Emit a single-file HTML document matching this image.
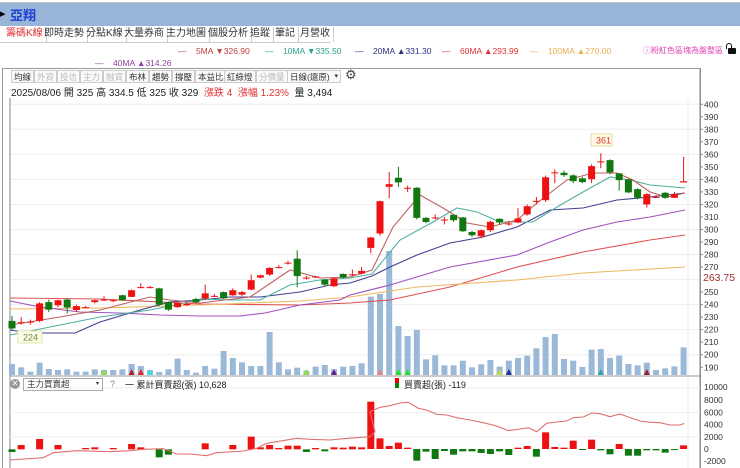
<!DOCTYPE html>
<html><head><meta charset="utf-8">
<style>
*{margin:0;padding:0;box-sizing:border-box}
body{width:740px;height:468px;overflow:hidden;background:#fff;font-family:"Liberation Sans","Noto Sans CJK TC",sans-serif;position:relative}
.abs{position:absolute;white-space:nowrap}
#title{left:0;top:2px;width:740px;height:24px;background:#98b5d9;border-top:1px solid #c8c8c8}
.tab{position:absolute;top:27px;height:15px;font-size:10px;line-height:14px;color:#333;border-right:1px solid #ccc;padding:0 3px}
.tb{position:absolute;top:70px;height:13px;font-size:8.5px;line-height:12px;border:1px solid #ccc;padding:0 2px;color:#333;background:#fafafa}
.tb.d{color:#bbb}
.lg{font-size:8.5px;position:absolute}
</style></head><body>
<div id="title" class="abs"></div>
<div class="abs" style="left:0;top:7px;font-size:11px;color:#000">▸</div>
<div class="abs" style="left:10px;top:5px;font-size:13px;font-weight:bold;color:#1a3fd0">亞翔</div>
<div class="abs" style="left:0;top:26px;width:330px;height:17px;border-bottom:1px solid #ccc"></div>
<div class="tab" style="left:3px;color:#e03030">籌碼K線</div>
<div class="tab" style="left:41px">即時走勢</div>
<div class="tab" style="left:83px">分點K線</div>
<div class="tab" style="left:121px">大量券商</div>
<div class="tab" style="left:163px">主力地圖</div>
<div class="tab" style="left:205px">個股分析</div>
<div class="tab" style="left:247px">追蹤</div>
<div class="tab" style="left:272px">筆記</div>
<div class="tab" style="left:297px">月營收</div>

<div class="lg" style="left:178px;top:46px;color:#c04040">—&nbsp;&nbsp;&nbsp;&nbsp;5MA <span>▼</span>326.90</div>
<div class="lg" style="left:265px;top:46px;color:#30a090">—&nbsp;&nbsp;&nbsp;&nbsp;10MA ▼335.50</div>
<div class="lg" style="left:355px;top:46px;color:#303080">—&nbsp;&nbsp;&nbsp;&nbsp;20MA ▲331.30</div>
<div class="lg" style="left:442px;top:46px;color:#e03030">—&nbsp;&nbsp;&nbsp;&nbsp;60MA ▲293.99</div>
<div class="lg" style="left:530px;top:46px;color:#e8b050">—&nbsp;&nbsp;&nbsp;&nbsp;100MA ▲270.00</div>
<div class="lg" style="left:643px;top:45px;color:#e040b0;font-size:8px">ⓘ粉紅色區塊為盤整區</div>
<div class="abs" style="left:728px;top:48px;width:8px;height:6px;background:#111;border-radius:1px"></div>
<div class="abs" style="left:726px;top:43px;width:6px;height:6px;border:1.5px solid #111;border-bottom:none;border-radius:3px 3px 0 0"></div>
<div class="lg" style="left:95px;top:58px;color:#9040a0">—&nbsp;&nbsp;&nbsp;&nbsp;40MA ▲314.26</div>

<div class="abs" style="left:2px;top:68px;width:699px;height:400px;border-left:1px solid #999;border-top:1px solid #999;border-right:1px solid #999"></div>
<div class="tb" style="left:11px">均線</div>
<div class="tb d" style="left:34px">外資</div>
<div class="tb d" style="left:57px">投信</div>
<div class="tb d" style="left:80px">主力</div>
<div class="tb d" style="left:103px">融資</div>
<div class="tb" style="left:126px">布林</div>
<div class="tb" style="left:149px">趨勢</div>
<div class="tb" style="left:172px">撐壓</div>
<div class="tb" style="left:195px">本益比</div>
<div class="tb" style="left:224px">紅綠燈</div>
<div class="tb d" style="left:256px">分價量</div>
<div class="tb" style="left:287px;width:54px">日線(還原) <span style="float:right;font-size:7px">▾</span></div>
<div class="abs" style="left:345px;top:67px;font-size:13px;color:#444">⚙</div>
<div class="abs" style="left:11px;top:84px;font-size:10px;color:#222">2025/08/06 開 325 高 334.5 低 325 收 329 &nbsp;<span style="color:#e03030">漲跌 4 &nbsp;漲幅 1.23%</span> &nbsp;量 3,494</div>

<svg class="abs" style="left:0;top:0" width="740" height="468" id="sv"></svg>

<div class="abs" style="left:10px;top:379px;width:10px;height:10px;border-radius:50%;background:#999;color:#fff;font-size:8px;line-height:10px;text-align:center">✕</div>
<div class="abs" style="left:23px;top:378px;width:80px;height:13px;border:1px solid #aaa;font-size:8.5px;line-height:11px;padding-left:3px;color:#333">主力買賣超<span style="position:absolute;right:3px;font-size:6px">▾</span></div>
<div class="abs" style="left:110px;top:379px;font-size:9px;color:#888">?</div>
<div class="abs" style="left:125px;top:378px;font-size:9px;color:#222">一 累計買賣超(張) 10,628</div>
<div class="abs" style="left:395px;top:378px;width:4px;height:5px;background:#e00"></div>
<div class="abs" style="left:395px;top:383px;width:4px;height:5px;background:#080"></div>
<div class="abs" style="left:404px;top:378px;font-size:9px;color:#222">買賣超(張) -119</div>

<script>
var C=[[227,221,231,220],[226,226,230,224],[226,226.5,228,224],[227,241,242,226],[242,236,244,234],[239.5,243.5,244,238],[244,237.7,245,233],[235.7,238.8,240,234],[238,238,239,237],[242,243.5,244,241],[244,244,246.8,243],[243.5,243.5,244.5,242],[247.5,243.5,248,243],[246.2,251.5,252,246],[254,254,257,253],[254,254,255,253],[253,240,253.5,239],[242,236,242.5,235],[238,241.6,242,237.5],[240.5,240.5,241.5,239],[244.5,242,245.5,241],[244.8,249,256,244],[247,247,248.5,246],[250,245,250.5,244.5],[247.5,251.5,253,247],[248,250,251,247],[252,259.5,264,251.5],[261.6,263.4,264,261],[264,269.3,270,263],[270,270,271.5,269],[273.5,273.5,275,272],[276.7,262.8,283.4,254],[261.6,261.6,263,260],[262,262.5,263,261],[260,256,260.5,255],[254.7,261,262,254],[264.5,261.6,265,261],[264.2,264.2,268,263],[264.8,266.9,270,264],[285.3,293.6,294,281],[296.8,322.6,323,295],[334.1,336.2,346,324.8],[341.3,337.6,350,334],[333.3,333.3,335,330],[333.3,309.3,334,308],[309.3,306,310,305],[309.6,309.6,312,308],[308,308,310,304],[311.7,307.4,312,306],[309.6,298.6,310,298],[298,295.4,299,294],[294.6,299.4,300,293],[299.4,306.1,307,298],[308.5,305.6,309,304],[304.8,304.8,307,303],[305.6,308.8,317,305],[312,318.6,320,311],[322.9,322.9,326,320],[323.4,341.6,343,322],[345.6,345.6,348,337],[345.3,343.4,347,342],[343.2,338.6,344,337],[340.8,337.8,342,337],[340.2,350.6,352,337],[354.4,354.4,360.8,349],[355.4,345.6,356,344],[344.8,339.4,345,331],[340,329.6,340.5,329],[332.2,325.3,333,324],[320,328.2,329,317.5],[326,326,327.5,325],[329.3,325.3,330,324.5],[325.3,328.2,330,325],[337.5,338.5,358,337.5]];
var V1=[642,652,665,638,657,660,658,665,665,658,660,660,658,642,648,660,666,658,626,660,668,648,656,603,624,637,648,648,546,637,658,653,662,650,645,658,650];
var V2=[738,730,530,522,393,618,648,630,718,706,736,736,722,742,733,720,740,722,714,707,685,651,642,717,722,741,689,687,714,707,732,736,728,750,745,739,682];
var s='';
function py(p){return 129.3+(380-p)*1.2524}
function X(i){return 12+i*9.2}
for(var p=200;p<=400;p+=20){var y=py(p);s+='<line x1="10" x2="700" y1="'+y+'" y2="'+y+'" stroke="#eee" stroke-width="1"/>';}
s+='<line x1="10" y1="98" x2="10" y2="468" stroke="#888"/>';
s+='<line x1="700" y1="68" x2="700" y2="468" stroke="#888"/>';
s+='<line x1="688" y1="98" x2="688" y2="468" stroke="#eee"/>';
s+='<line x1="10" y1="376" x2="700" y2="376" stroke="#999"/>';
for(var p=190;p<=400;p+=10){if(p==260)continue;s+='<text x="704" y="'+(py(p)+3)+'" font-size="8.5" fill="#333">'+p+'</text><line x1="700" x2="703" y1="'+py(p)+'" y2="'+py(p)+'" stroke="#888"/>';}
s+='<text x="703" y="281" font-size="10.5" fill="#a03030">263.75</text>';
for(var i=0;i<74;i++){var t=i<37?150+V1[i]/3:120+V2[i-37]/3;s+='<rect x="'+(X(i)-3)+'" y="'+t+'" width="6" height="'+(375-t)+'" fill="#9ab8d8"/>';}
function pl(pts,c){s+='<polyline fill="none" stroke="'+c+'" stroke-width="1.1" points="'+pts+'"/>'}
pl("10,298 100,299 200,304 300,305 350,303 390,300 450,287 517,267 583,252 650,240 685,235","#e05050");
pl("10,309 100,308 200,305 300,301 350,297 417,287 517,280 583,273 685,267","#f0b860");
pl("10,301 40,307 80,312 120,313 160,315 200,316 240,316 265,313 300,305 340,300 350,295 390,285 450,267 517,255 550,242 583,230 617,222 650,217 685,210","#a050c0");
pl("10,330 30,333 75,333 100,322 140,310 170,302 200,300 230,297 260,297 300,292 330,285 350,283 372,276 390,267 417,255 450,243 483,237 517,227 550,210 583,208 617,200 650,197 685,193","#404090");
pl("10,335 50,327 100,317 150,310 180,304 200,299 230,300 260,300 290,285 320,280 350,278 372,274 400,240 433,222 457,208 477,212 500,222 533,222 557,207 583,192 610,177 630,180 650,185 685,188","#50b0a0");
pl("10,325 60,317 100,310 150,297 170,300 200,303 250,297 290,270 320,278 350,277 372,270 393,227 420,195 443,208 467,223 490,227 517,220 537,203 567,180 593,173 617,173 633,180 650,192 667,197 685,193","#c06060");
for(var i=0;i<C.length;i++){var c=C[i],x=X(i),up=c[1]>=c[0],col=up?'#ee1111':'#117711';
s+='<line x1="'+x+'" x2="'+x+'" y1="'+py(c[2])+'" y2="'+py(c[3])+'" stroke="'+col+'"/>';
var t=py(Math.max(c[0],c[1])),h=Math.max(1,py(Math.min(c[0],c[1]))-t);
s+='<rect x="'+(x-3.5)+'" y="'+t+'" width="7" height="'+h+'" fill="'+col+'"/>';}
s+='<rect x="591" y="134" width="21" height="12" fill="#fffbe6" stroke="#e8d8a0"/><text x="596" y="143.5" font-size="9" fill="#e03030">361</text>';
s+='<rect x="18" y="331" width="24" height="12" fill="#fbfde6" stroke="#e0e6b0"/><text x="23" y="340.5" font-size="9" fill="#6a8a3a">224</text>';
[[10,'#90e040'],[13,'#aa2222'],[14,'#ee2222'],[15,'#30e0e0'],[32,'#90e040'],[35,'#602090'],[40,'#f08080'],[42,'#20e020'],[43,'#20e020'],[53,'#c0e040'],[54,'#203090'],[64,'#30a0a0'],[69,'#902030']].forEach(function(m){var x=X(m[0]);s+='<polygon points="'+(x-3)+',375 '+(x+3)+',375 '+x+',369" fill="'+m[1]+'"/>';});
function ly(v){return 449-v*0.0061}
[8000,6000,4000,2000,0,-2000].forEach(function(a){s+='<text x="704" y="'+(ly(a)+3)+'" font-size="8.5" fill="#333">'+a+'</text>';});
[10000,6000,2000].forEach(function(v){s+='<line x1="10" x2="700" y1="'+ly(v)+'" y2="'+ly(v)+'" stroke="#eee"/>';});
s+='<text x="704" y="390" font-size="8.5" fill="#333">10000</text>';
var L1=[[268,276],[255,268],[268,270],[237,268],[267,268],[255,268],[268,270],[267,268],[264,268],[262,268],[268,270],[264,268],[267,268],[252,268],[262,268],[267,268],[268,292],[268,284],[267,268],[267,268],[268,270],[250,268],[268,270],[267,268],[255,268],[267,268],[230,268],[262,268],[255,268],[264,268],[257,268],[257,268],[268,276],[264,268],[268,274],[262,268],[263,268],[260,268],[262,268]];
for(var i=0;i<39;i++){var a=L1[i],t=360+a[0]/3,b=360+a[1]/3,col=a[0]<268?'#ee1111':'#117711';if(b-t<1)continue;s+='<rect x="'+(X(i)-3.5)+'" y="'+t+'" width="7" height="'+(b-t)+'" fill="'+col+'"/>';}
var L2=[[95,237],[205,237],[228,237],[218,237],[233,237],[237,272],[237,245],[237,267],[237,243],[237,254],[237,244],[237,244],[237,249],[237,252],[237,244],[237,255],[233,237],[228,237],[237,260],[187,237],[231,237],[233,237],[212,237],[237,238],[209,237],[237,241],[237,253],[222,237],[237,257],[237,257],[237,241],[237,241],[237,248],[237,238],[226,237]];
for(var i=0;i<35;i++){var a=L2[i],t=370+a[0]/3,b=370+a[1]/3,col=a[0]<237?'#ee1111':'#117711';s+='<rect x="'+(X(i+39)-3.5)+'" y="'+t+'" width="7" height="'+Math.max(1,b-t)+'" fill="'+col+'"/>';}
var P1=[[0,300],[100,293],[130,278],[200,272],[300,275],[360,272],[400,268],[460,266],[500,282],[540,282],[590,287],[620,278],[700,273],[740,265],[770,250],[800,245],[860,235],[900,238],[960,240],[1000,236],[1080,230],[1095,215]];
var P2=[[0,125],[30,112],[60,107],[90,99],[115,97],[145,115],[170,120],[200,133],[230,135],[260,143],[300,150],[340,158],[380,168],[415,182],[450,177],[475,173],[500,185],[530,160],[560,156],[590,153],[610,143],[640,141],[665,129],[690,131],[720,140],[750,132],[780,143],[810,153],[840,157],[870,158],[900,165],[930,165],[943,160]];
var pts=P1.map(function(p){return (p[0]/3+10)+','+(360+p[1]/3)}).concat(P2.map(function(p){return (370+p[0]/3)+','+(370+p[1]/3)})).join(' ');
pl(pts,"#e07070");
document.getElementById('sv').innerHTML=s;
</script>
</body></html>
